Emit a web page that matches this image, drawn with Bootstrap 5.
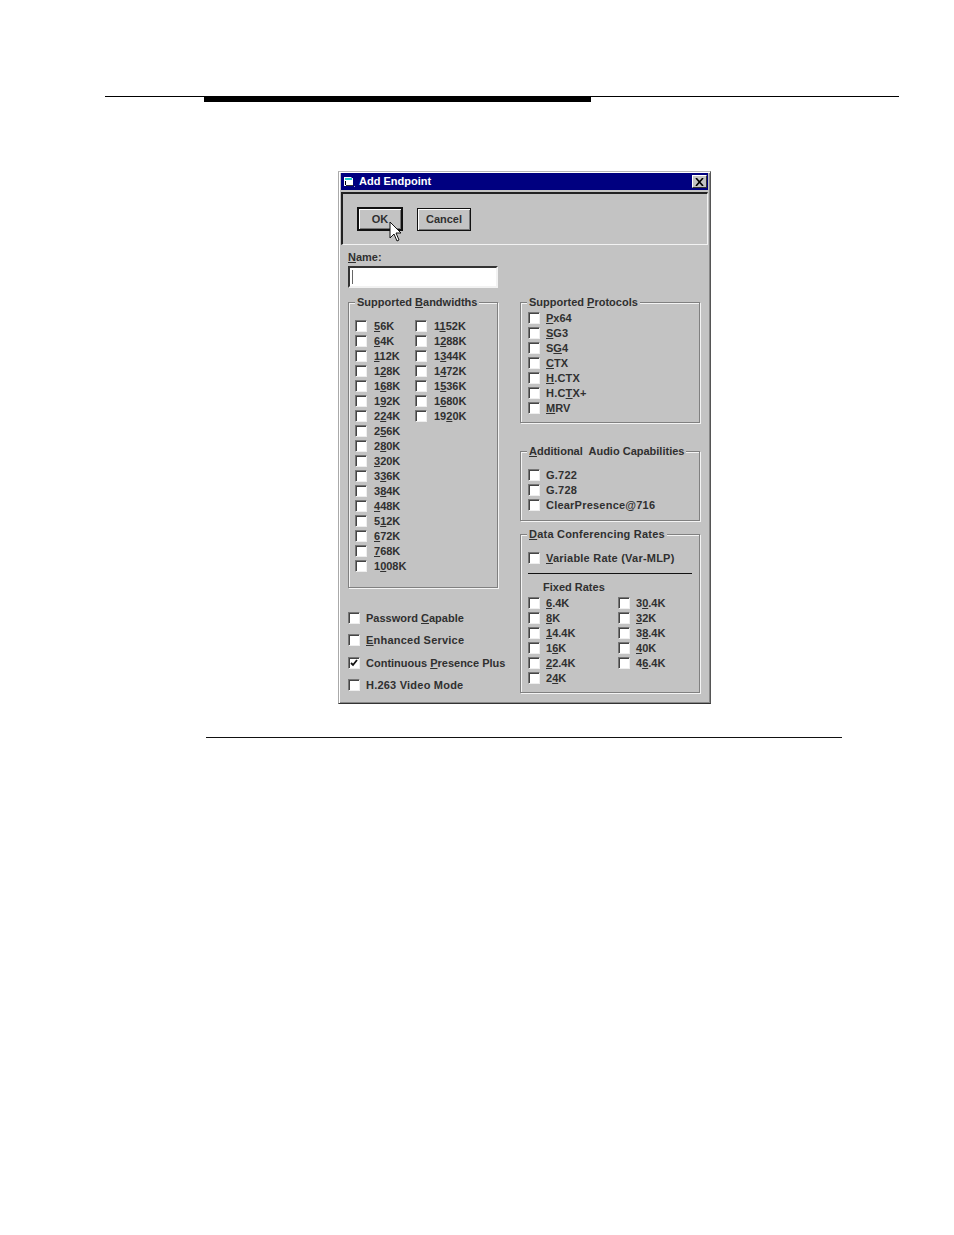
<!DOCTYPE html>
<html lang="en">
<head>
<meta charset="utf-8">
<title>Add Endpoint</title>
<link href="https://cdn.jsdelivr.net/npm/bootstrap@5.3.0/dist/css/bootstrap.min.css" rel="stylesheet">
<style>
body{background:#fff;margin:0;height:1235px;overflow:hidden;font-family:"Liberation Sans",Arial,sans-serif;}
.top-rule{margin:96px 0 0 105px;width:794px;border-top:1px solid #000;}
.top-bar{margin-left:99px;width:387px;height:5px;background:#000;}
.win{margin:69px 0 0 338px;width:373px;height:533px;background:#c3c3c3;border:1px solid #000;border-top-color:#b8b8b8;border-left-color:#aaa;border-right-color:#555;border-bottom-color:#333;box-shadow:inset 1px 1px 0 #fff,inset -1px -1px 0 #888;padding:1px 2px 0 2px;font-size:11px;line-height:15px;font-weight:700;color:#303030;}
.title-row{height:17px;background:#000080;color:#fff;padding:0 1px 0 3px;line-height:17px;}
.title-txt{margin-left:3px;}
.close-x{width:15px;height:13px;background:#c3c3c3;border:1px solid;border-color:#fff #333 #333 #fff;}
.tool-panel{height:53px;margin-top:2px;border-top:2px solid #222;border-left:2px solid #222;border-bottom:1px solid #f2f2f2;border-right:1px solid #f2f2f2;padding:13px 0 0 14px;gap:14px;}
.w95-btn{height:24px;background:#c3c3c3;color:#303030;border:1px solid #111;box-shadow:inset 1px 1px 0 #fff,inset -1px -1px 0 #777;font-weight:700;font-size:11px;padding:0;border-radius:0;}
.btn-ok{width:46px;border-width:2px;}
.btn-no{width:54px;margin-top:1px;height:23px;}
.ptr{position:absolute;left:32px;top:14px;}
.name-lab{padding:5px 0 0 7px;height:21px;}
.name-in{display:block;margin-left:7px;width:150px;height:22px;background:#fff;border:2px solid;border-color:#333 #f2f2f2 #f2f2f2 #333;padding:2px;}
.name-in i{display:block;width:1px;height:14px;background:#666;}
.main-cols{margin-left:7px;padding-top:7px;}
.left-col{width:150px;}
.right-col{width:180px;margin-left:22px;}
.grp{border:1px solid #808080;box-shadow:1px 1px 0 #f4f4f4,inset 1px 1px 0 #f4f4f4;position:relative;}
.grp legend{float:none;width:auto;white-space:nowrap;margin:0 0 0 -1px;padding:0 2px;font-size:11px;line-height:14px;font-weight:700;background:#c3c3c3;}
.g-band{height:293px;padding:10px 0 0 6px;}
.g-band legend{margin-left:0;}
.g-prot{height:128px;padding:2px 0 0 7px;}
.g-aud{height:77px;margin-top:21px;padding:10px 0 0 7px;}
.g-data{height:166px;margin-top:6px;padding:10px 0 0 7px;}
.col-first{width:60px;}
.col-fr{width:90px;}
.opt{height:15px;gap:7px;white-space:nowrap;}
.right-col .opt{gap:6px;}
.wide-txt{letter-spacing:.22px;}
.chk{appearance:none;-webkit-appearance:none;flex:none;width:12px;height:12px;margin:0 0 1px;background:#fff center/10px 10px no-repeat;border:1px solid;border-color:#777 #eee #eee #777;box-shadow:inset 1px 1px 0 #444;border-radius:0;}
.chk:checked{background-image:url("data:image/svg+xml,%3Csvg xmlns='http://www.w3.org/2000/svg' viewBox='0 0 10 10'%3E%3Cpath d='M2 5l2 2 4-5' fill='none' stroke='%23111' stroke-width='1.8'/%3E%3C/svg%3E");}
.opt-stack{margin-top:23px;}
.opt-stack .opt{margin-bottom:7.4px;gap:6px;}
.g-rule{height:1px;background:#111;margin:7px 7px 0 0;}
.fixed-lab{margin:6px 0 0 15px;height:16px;}
.foot-rule{margin:33px 0 0 206px;width:636px;border-top:1px solid #111;}
u{text-underline-offset:1px;}
</style>
</head>
<body>
<div class="top-rule"><div class="top-bar"></div></div>
<div class="win" role="dialog" aria-label="Add Endpoint">
  <div class="title-row d-flex align-items-center">
    <svg width="12" height="12" viewBox="0 0 12 12" class="flex-shrink-0"><path d="M0 1h7l1 1h1v8H0z" fill="#fff"/><path d="M1 2h7v2H1z" fill="#2cc"/><path d="M1 5h1v4H1z" fill="#000"/><path d="M2 9h7v1H2z" fill="#333"/><path d="M10 10h1v1h-1z" fill="#aaa"/></svg>
    <span class="title-txt">Add Endpoint</span>
    <span class="close-x ms-auto d-flex align-items-center justify-content-center">
      <svg width="9" height="8" viewBox="0 0 9 8"><path d="M1 0l7 8M8 0L1 8" stroke="#000" stroke-width="1.6"/></svg>
    </span>
  </div>
  <div class="tool-panel d-flex">
    <div class="position-relative">
      <button type="button" class="btn w95-btn btn-ok">OK</button>
      <svg class="ptr" width="13" height="22" viewBox="0 0 13 22"><path d="M1 1v16l4-4 3 7 2-1-3-7h5z" fill="#fff" stroke="#111"/></svg>
    </div>
    <button type="button" class="btn w95-btn btn-no">Cancel</button>
  </div>
  <div class="name-lab"><u>N</u>ame:</div>
  <div class="name-in"><i></i></div>
  <div class="main-cols d-flex">
    <div class="left-col">
      <fieldset class="grp g-band">
        <legend>Supported <u>B</u>andwidths</legend>
        <div class="d-flex">
          <div class="col-first">
            <label class="opt d-flex align-items-center"><input type="checkbox" class="chk"><span><u>5</u>6K</span></label>
            <label class="opt d-flex align-items-center"><input type="checkbox" class="chk"><span><u>6</u>4K</span></label>
            <label class="opt d-flex align-items-center"><input type="checkbox" class="chk"><span><u>1</u>12K</span></label>
            <label class="opt d-flex align-items-center"><input type="checkbox" class="chk"><span>1<u>2</u>8K</span></label>
            <label class="opt d-flex align-items-center"><input type="checkbox" class="chk"><span>1<u>6</u>8K</span></label>
            <label class="opt d-flex align-items-center"><input type="checkbox" class="chk"><span>1<u>9</u>2K</span></label>
            <label class="opt d-flex align-items-center"><input type="checkbox" class="chk"><span>2<u>2</u>4K</span></label>
            <label class="opt d-flex align-items-center"><input type="checkbox" class="chk"><span>2<u>5</u>6K</span></label>
            <label class="opt d-flex align-items-center"><input type="checkbox" class="chk"><span>2<u>8</u>0K</span></label>
            <label class="opt d-flex align-items-center"><input type="checkbox" class="chk"><span><u>3</u>20K</span></label>
            <label class="opt d-flex align-items-center"><input type="checkbox" class="chk"><span>3<u>3</u>6K</span></label>
            <label class="opt d-flex align-items-center"><input type="checkbox" class="chk"><span>3<u>8</u>4K</span></label>
            <label class="opt d-flex align-items-center"><input type="checkbox" class="chk"><span><u>4</u>48K</span></label>
            <label class="opt d-flex align-items-center"><input type="checkbox" class="chk"><span>5<u>1</u>2K</span></label>
            <label class="opt d-flex align-items-center"><input type="checkbox" class="chk"><span><u>6</u>72K</span></label>
            <label class="opt d-flex align-items-center"><input type="checkbox" class="chk"><span><u>7</u>68K</span></label>
            <label class="opt d-flex align-items-center"><input type="checkbox" class="chk"><span>1<u>0</u>08K</span></label>
          </div>
          <div>
            <label class="opt d-flex align-items-center"><input type="checkbox" class="chk"><span>1<u>1</u>52K</span></label>
            <label class="opt d-flex align-items-center"><input type="checkbox" class="chk"><span>1<u>2</u>88K</span></label>
            <label class="opt d-flex align-items-center"><input type="checkbox" class="chk"><span>1<u>3</u>44K</span></label>
            <label class="opt d-flex align-items-center"><input type="checkbox" class="chk"><span>1<u>4</u>72K</span></label>
            <label class="opt d-flex align-items-center"><input type="checkbox" class="chk"><span>1<u>5</u>36K</span></label>
            <label class="opt d-flex align-items-center"><input type="checkbox" class="chk"><span>1<u>6</u>80K</span></label>
            <label class="opt d-flex align-items-center"><input type="checkbox" class="chk"><span>19<u>2</u>0K</span></label>
          </div>
        </div>
      </fieldset>
      <div class="opt-stack">
        <label class="opt d-flex align-items-center"><input type="checkbox" class="chk"><span>Password <u>C</u>apable</span></label>
        <label class="opt d-flex align-items-center"><input type="checkbox" class="chk"><span class="wide-txt"><u>E</u>nhanced Service</span></label>
        <label class="opt d-flex align-items-center"><input type="checkbox" class="chk" checked><span>Continuous <u>P</u>resence Plus</span></label>
        <label class="opt d-flex align-items-center"><input type="checkbox" class="chk"><span class="wide-txt">H.263 Video Mode</span></label>
      </div>
    </div>
    <div class="right-col">
      <fieldset class="grp g-prot">
        <legend>Supported <u>P</u>rotocols</legend>
        <label class="opt d-flex align-items-center"><input type="checkbox" class="chk"><span><u>P</u>x64</span></label>
        <label class="opt d-flex align-items-center"><input type="checkbox" class="chk"><span><u>S</u>G3</span></label>
        <label class="opt d-flex align-items-center"><input type="checkbox" class="chk"><span>S<u>G</u>4</span></label>
        <label class="opt d-flex align-items-center"><input type="checkbox" class="chk"><span><u>C</u>TX</span></label>
        <label class="opt d-flex align-items-center"><input type="checkbox" class="chk"><span class="wide-txt"><u>H</u>.CTX</span></label>
        <label class="opt d-flex align-items-center"><input type="checkbox" class="chk"><span class="wide-txt">H.C<u>T</u>X+</span></label>
        <label class="opt d-flex align-items-center"><input type="checkbox" class="chk"><span><u>M</u>RV</span></label>
      </fieldset>
      <fieldset class="grp g-aud">
        <legend><u>A</u>dditional&nbsp; Audio Capabilities</legend>
        <label class="opt d-flex align-items-center"><input type="checkbox" class="chk"><span class="wide-txt">G.722</span></label>
        <label class="opt d-flex align-items-center"><input type="checkbox" class="chk"><span class="wide-txt">G.728</span></label>
        <label class="opt d-flex align-items-center"><input type="checkbox" class="chk"><span class="wide-txt">ClearPresence@716</span></label>
      </fieldset>
      <fieldset class="grp g-data">
        <legend class="wide-txt"><u>D</u>ata Conferencing Rates</legend>
        <label class="opt d-flex align-items-center"><input type="checkbox" class="chk"><span class="wide-txt"><u>V</u>ariable Rate (Var-MLP)</span></label>
        <div class="g-rule"></div>
        <div class="fixed-lab">Fixed Rates</div>
        <div class="d-flex">
          <div class="col-fr">
            <label class="opt d-flex align-items-center"><input type="checkbox" class="chk"><span><u>6</u>.4K</span></label>
            <label class="opt d-flex align-items-center"><input type="checkbox" class="chk"><span><u>8</u>K</span></label>
            <label class="opt d-flex align-items-center"><input type="checkbox" class="chk"><span><u>1</u>4.4K</span></label>
            <label class="opt d-flex align-items-center"><input type="checkbox" class="chk"><span>1<u>6</u>K</span></label>
            <label class="opt d-flex align-items-center"><input type="checkbox" class="chk"><span><u>2</u>2.4K</span></label>
            <label class="opt d-flex align-items-center"><input type="checkbox" class="chk"><span>2<u>4</u>K</span></label>
          </div>
          <div>
            <label class="opt d-flex align-items-center"><input type="checkbox" class="chk"><span>3<u>0</u>.4K</span></label>
            <label class="opt d-flex align-items-center"><input type="checkbox" class="chk"><span><u>3</u>2K</span></label>
            <label class="opt d-flex align-items-center"><input type="checkbox" class="chk"><span>3<u>8</u>.4K</span></label>
            <label class="opt d-flex align-items-center"><input type="checkbox" class="chk"><span><u>4</u>0K</span></label>
            <label class="opt d-flex align-items-center"><input type="checkbox" class="chk"><span>4<u>6</u>.4K</span></label>
          </div>
        </div>
      </fieldset>
    </div>
  </div>
</div>
<div class="foot-rule"></div>
<script src="https://cdn.jsdelivr.net/npm/bootstrap@5.3.0/dist/js/bootstrap.bundle.min.js"></script>
</body>
</html>
